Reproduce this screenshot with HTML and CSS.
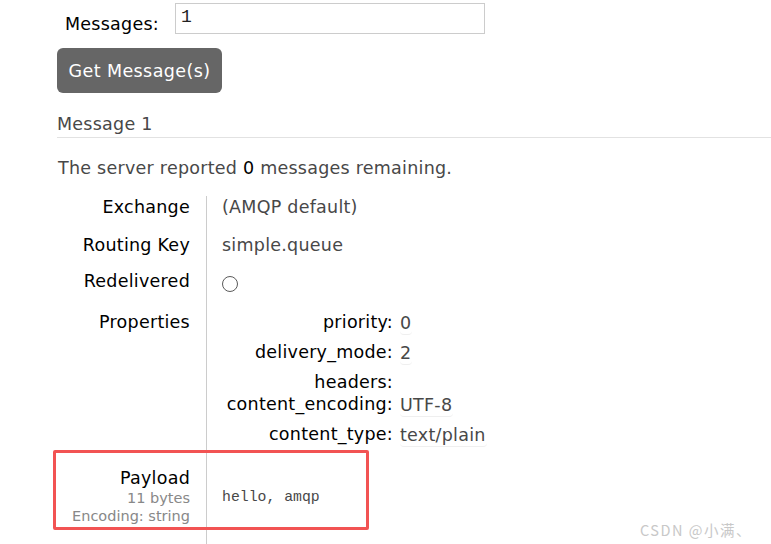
FILE: index.html
```html
<!DOCTYPE html>
<html>
<head>
<meta charset="utf-8">
<link rel="stylesheet" href="styles.css">
</head>
<body>
<div class="page">
  <div class="msg-row">
    <label class="msg-label">Messages:</label>
    <input class="msg-input" type="text" value="1">
  </div>
  <button class="get-btn">Get Message(s)</button>
  <h3 class="msg-title">Message 1</h3>
  <p class="remaining">The server reported <span class="hl">0</span> messages remaining.</p>
  <div class="facts">
    <div class="key">Exchange</div>
    <div class="val">(AMQP default)</div>
    <div class="key tight">Routing Key</div>
    <div class="val tight">simple.queue</div>
    <div class="key">Redelivered</div>
    <div class="val"><span class="radio"></span></div>
    <div class="key">Properties</div>
    <div class="val props-cell">
      <div class="props">
        <div class="pk">priority:</div><div class="pv"><span class="chip">0</span></div>
        <div class="pk">delivery_mode:</div><div class="pv"><span class="chip">2</span></div>
        <div class="pk short">headers:</div><div class="pv short"></div>
        <div class="pk">content_encoding:</div><div class="pv"><span class="chip">UTF-8</span></div>
        <div class="pk">content_type:</div><div class="pv"><span class="chip">text/plain</span></div>
      </div>
    </div>
    <div class="key payload-key">
      <div class="payload-title">Payload</div>
      <div class="sub">11 bytes</div>
      <div class="sub">Encoding: string</div>
      <span class="mark"></span>
    </div>
    <div class="val payload-val"><pre class="payload">hello, amqp</pre></div>
    <div class="key tail"></div>
    <div class="val tail"></div>
  </div>
</div>
<div class="watermark">CSDN @小满、</div>
</body>
</html>
```
FILE: styles.css
```css
html, body {
  margin: 0;
  padding: 0;
  background: #fff;
  overflow: hidden;
}
body {
  font-family: "DejaVu Sans", Verdana, sans-serif;
  font-size: 17.5px;
  letter-spacing: 0.25px;
  color: #484848;
  width: 771px;
  height: 544px;
  position: relative;
}
.page {
  padding-left: 57px;
  height: 544px;
  overflow: hidden;
}
.msg-row {
  display: flex;
  align-items: center;
  padding-top: 3px;
  height: 31px;
}
.msg-label {
  color: #000;
  margin-left: 8px;
  width: 110px;
  padding-top: 10px;
}
.msg-input {
  box-sizing: border-box;
  width: 310px;
  height: 31px;
  border: 1px solid #ccc;
  font-family: "Liberation Mono", monospace;
  font-size: 18px;
  padding: 0 5px 4px;
  color: #222;
  outline: none;
}
.get-btn {
  display: block;
  margin-top: 14px;
  width: 165px;
  height: 45px;
  border: none;
  border-radius: 6px;
  background: #666;
  color: #fff;
  font-family: "DejaVu Sans", Verdana, sans-serif;
  font-size: 17.5px;
  letter-spacing: 0.4px;
  padding: 0;
}
.msg-title {
  margin: 20px 0 0;
  font-weight: normal;
  font-size: 17.5px;
  line-height: 22px;
  padding-bottom: 2px;
  border-bottom: 1px solid #e2e2e2;
  color: #484848;
}
.remaining {
  margin: 19px 0 17px 1px;
  line-height: 22px;
}
.hl {
  color: #000;
}
.facts {
  display: grid;
  grid-template-columns: 149px 1fr;
}
.key {
  box-sizing: border-box;
  text-align: right;
  padding-right: 16px;
  color: #000;
  line-height: 22px;
  padding-bottom: 16px;
}
.val {
  border-left: 1px solid #ccc;
  padding-left: 15px;
  line-height: 22px;
  padding-bottom: 16px;
}
.key.tight, .val.tight {
  padding-bottom: 14px;
}
.radio {
  display: block;
  box-sizing: border-box;
  width: 16px;
  height: 16px;
  border: 1px solid #5a5a5a;
  border-radius: 50%;
  margin-top: 6px;
  margin-bottom: 3px;
}
.props-cell {
  padding-left: 0;
  padding-bottom: 0;
}
.props {
  display: grid;
  grid-template-columns: 193px auto;
  width: 300px;
}
.pk {
  text-align: right;
  color: #000;
  line-height: 22px;
  height: 30px;
  padding-right: 7px;
}
.pv {
  height: 30px;
}
.short {
  height: 22px;
}
.chip {
  display: inline-block;
  line-height: 22px;
  margin-top: 1px;
  border-bottom: 1px solid #efefef;
  border-radius: 4px;
  padding-right: 1px;
}
.payload-key {
  position: relative;
  padding-top: 14px;
  padding-bottom: 6px;
}
.payload-title {
  line-height: 22px;
}
.sub {
  font-size: 14.5px;
  letter-spacing: 0;
  line-height: 18px;
  color: #888;
}
.mark {
  position: absolute;
  left: -4px;
  top: -3px;
  width: 316px;
  height: 80px;
  box-sizing: border-box;
  border: 3px solid #f25353;
  border-radius: 2px;
}
.payload-val {
  display: flex;
  align-items: center;
  padding-bottom: 6px;
  padding-top: 14px;
}
.payload {
  margin: 2px 0 0;
  font-family: "Liberation Mono", monospace;
  font-size: 14.8px;
  letter-spacing: 0;
  color: #484848;
}
.tail {
  height: 30px;
  padding: 0;
}
.watermark {
  position: absolute;
  left: 640px;
  top: 519px;
  font-family: "Noto Sans CJK SC", sans-serif;
  font-size: 14.5px;
  line-height: 22px;
  color: #c8c8c8;
  letter-spacing: 1.5px;
}
```
